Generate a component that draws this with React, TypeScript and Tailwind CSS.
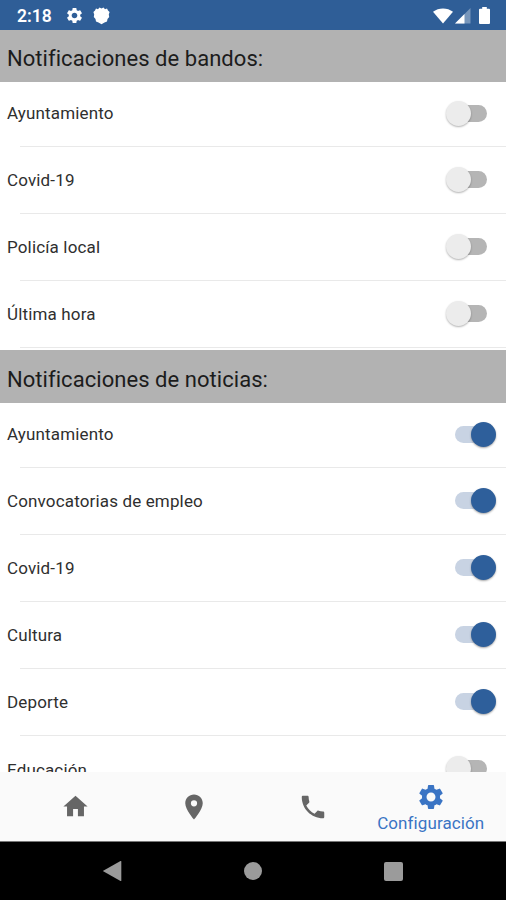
import React, { useState } from 'react';
import { MdHome, MdLocationOn, MdPhone, MdSettings } from 'react-icons/md';

interface Topic {
  id: string;
  name: string;
  enabled: boolean;
}

interface TopicSectionProps {
  title: string;
  topics: Topic[];
  headerClass: string;
  onToggle: (id: string) => void;
}

const initialBandos: Topic[] = [
  { id: 'b-ayuntamiento', name: 'Ayuntamiento', enabled: false },
  { id: 'b-covid', name: 'Covid-19', enabled: false },
  { id: 'b-policia', name: 'Policía local', enabled: false },
  { id: 'b-ultima', name: 'Última hora', enabled: false },
];

const initialNoticias: Topic[] = [
  { id: 'n-ayuntamiento', name: 'Ayuntamiento', enabled: true },
  { id: 'n-empleo', name: 'Convocatorias de empleo', enabled: true },
  { id: 'n-covid', name: 'Covid-19', enabled: true },
  { id: 'n-cultura', name: 'Cultura', enabled: true },
  { id: 'n-deporte', name: 'Deporte', enabled: true },
  { id: 'n-educacion', name: 'Educación', enabled: false },
];

const Toggle: React.FC<{ topic: Topic; onToggle: (id: string) => void }> = ({ topic, onToggle }) => (
  <button
    type="button"
    role="switch"
    aria-checked={topic.enabled}
    aria-label={topic.name}
    onClick={() => onToggle(topic.id)}
    className="relative mr-2.5 h-[26px] w-[50px]"
  >
    <span
      className={
        topic.enabled
          ? 'absolute left-[9px] top-1 h-[17px] w-8 rounded-full bg-[#c8d3e3]'
          : 'absolute left-[9px] top-1 h-[17px] w-8 rounded-full bg-[#b5b5b5]'
      }
    />
    <span
      className={
        topic.enabled
          ? 'absolute left-[25px] top-0 size-[25px] rounded-full bg-[#2e5f9b] shadow-[0_1px_2px_rgba(0,0,0,0.35)]'
          : 'absolute left-0 top-0 size-[25px] rounded-full bg-[#ececec] shadow-[0_1px_2px_rgba(0,0,0,0.3)]'
      }
    />
  </button>
);

const TopicSection: React.FC<TopicSectionProps> = ({ title, topics, headerClass, onToggle }) => (
  <section>
    <h2 className={headerClass}>{title}</h2>
    <ul>
      {topics.map(topic => (
        <li key={topic.id} className="group flex h-[67.1px] flex-col first:h-[64.8px]">
          <div className="flex flex-1 items-center justify-between pl-[7px]">
            <span className="pt-0.5 text-[17px] tracking-[0.15px] text-[#2f2f2f] group-first:pt-0">{topic.name}</span>
            <Toggle topic={topic} onToggle={onToggle} />
          </div>
          <div className="ml-5 h-px shrink-0 bg-[#e9e9e9]" />
        </li>
      ))}
    </ul>
  </section>
);

const StatusBar: React.FC = () => (
  <header className="flex h-[30px] shrink-0 items-center bg-[#2f5e97] pl-[17px] pr-4 pt-px text-white">
    <span className="w-[48px] pt-px text-[17.5px] font-semibold">2:18</span>
    <MdSettings size={19} />
    <svg className="ml-[9px]" width="17" height="18" viewBox="0 0 17 18" fill="currentColor">
      <path d="M3 1.5 5 2.2 6.5.6 8.5 1.4 10.5.6 12 2.2 14 1.5 15 3.5 16.6 5 15.8 7.5 16.2 10 14.5 12 14 14.5 11.5 15.5 8.5 17.2 5.5 15.5 3 14.5 2.5 12 .8 10 1.2 7.5.4 5 2 3.5Z" />
    </svg>
    <div className="ml-auto flex items-center">
      <svg width="20" height="16" viewBox="0 0 20 16" fill="currentColor">
        <path d="M0 3.8C5.6-.7 14.4-.7 20 3.8L10 15.6Z" />
      </svg>
      <svg className="ml-0.5" width="16" height="16" viewBox="0 0 16 16" fill="currentColor">
        <path d="M0 15.5 15.5 0V15.5Z" opacity="0.35" />
        <path d="M0 15.5 9.5 6V15.5Z" />
      </svg>
      <svg className="ml-2" width="11" height="18" viewBox="0 0 11 18" fill="currentColor">
        <path d="M3.2 0H7.8V1.8H10A1 1 0 0 1 11 2.8V16A1 1 0 0 1 10 17H1A1 1 0 0 1 0 16V2.8A1 1 0 0 1 1 1.8H3.2Z" />
      </svg>
    </div>
  </header>
);

const TabBar: React.FC = () => (
  <nav className="grid h-[69px] shrink-0 grid-cols-4 bg-[#fafafa] px-4 text-[#666666]">
    <button type="button" aria-label="Inicio" className="flex items-center justify-center">
      <MdHome size={29} />
    </button>
    <button type="button" aria-label="Mapa" className="flex items-center justify-center pl-px">
      <MdLocationOn size={30} />
    </button>
    <button type="button" aria-label="Teléfono" className="flex items-center justify-center pl-px pt-px">
      <MdPhone size={30} />
    </button>
    <button type="button" className="flex flex-col items-center pt-2.5 text-[#3a74c4]">
      <MdSettings size={30} />
      <span className="text-[17px] leading-[22px] tracking-[0.1px]">Configuración</span>
    </button>
  </nav>
);

const SystemBar: React.FC = () => (
  <footer className="grid h-[59px] shrink-0 grid-cols-3 items-center border-t border-[#777777] bg-black px-[42px] text-[#9b9b9b]">
    <svg className="mx-auto" width="20" height="22" viewBox="0 0 20 22" fill="currentColor">
      <path d="M.8 11 18.5 1Q19.3.7 19.3 1.6V20.4Q19.3 21.3 18.5 21Z" />
    </svg>
    <span className="mx-auto size-[18px] rounded-full bg-[#9b9b9b]" />
    <span className="mx-auto size-[19px] rounded-xs bg-[#9b9b9b]" />
  </footer>
);

const App: React.FC = () => {
  const [bandos, setBandos] = useState<Topic[]>(initialBandos);
  const [noticias, setNoticias] = useState<Topic[]>(initialNoticias);

  const flip = (list: Topic[], id: string) =>
    list.map(topic => (topic.id === id ? { ...topic, enabled: !topic.enabled } : topic));

  return (
    <div className="flex h-[900px] w-[506px] flex-col overflow-hidden bg-white font-[Roboto,sans-serif]">
      <StatusBar />
      <main className="min-h-0 flex-1 overflow-hidden">
        <TopicSection
          title="Notificaciones de bandos:"
          topics={bandos}
          headerClass="flex h-[52px] items-center bg-[#b2b2b2] pl-[7px] pt-1 text-[22px] tracking-[0.05px] text-[#1c1c1c]"
          onToggle={id => setBandos(flip(bandos, id))}
        />
        <TopicSection
          title="Notificaciones de noticias:"
          topics={noticias}
          headerClass="mt-0.5 flex h-[53px] items-center bg-[#b2b2b2] pl-[7px] pt-1.5 text-[22px] tracking-[0.05px] text-[#1c1c1c]"
          onToggle={id => setNoticias(flip(noticias, id))}
        />
      </main>
      <TabBar />
      <SystemBar />
    </div>
  );
};

export default App;
